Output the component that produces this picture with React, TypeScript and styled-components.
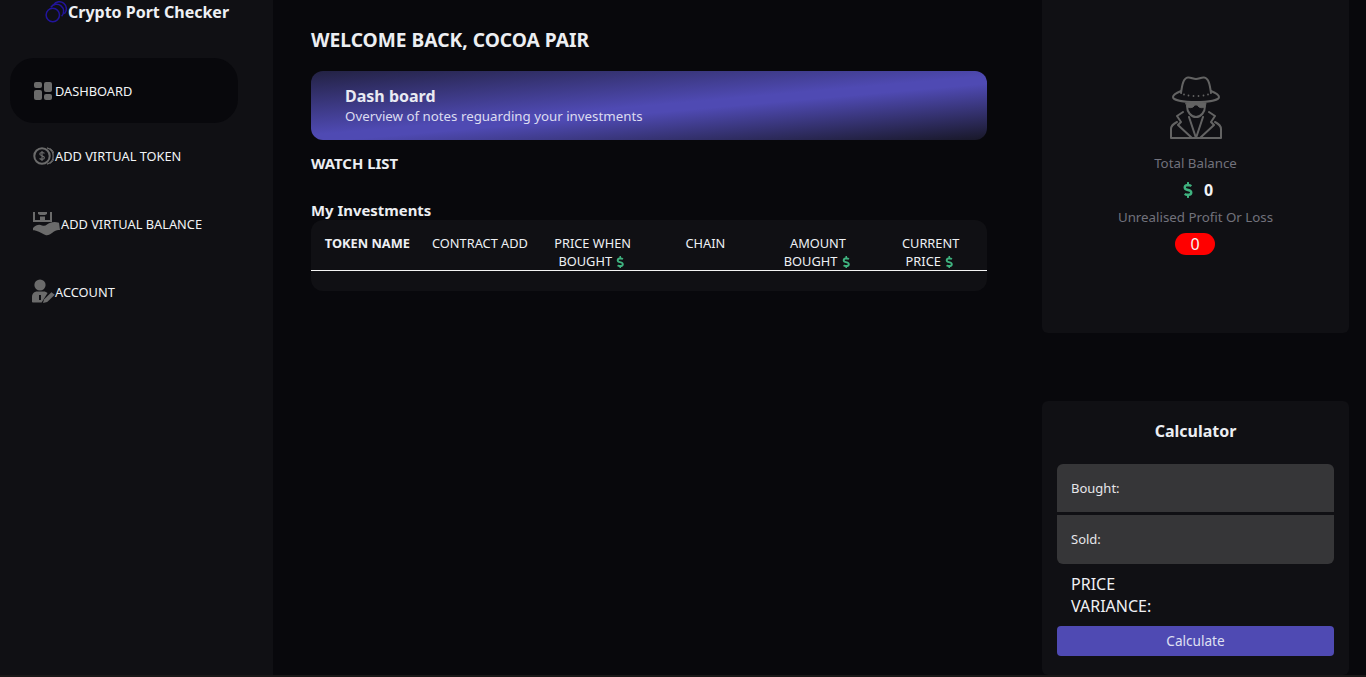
import React from "react";
import styled, { createGlobalStyle } from "styled-components";
import { FaDollarSign } from "react-icons/fa";

const Global = createGlobalStyle`
  html, body { margin: 0; padding: 0; background: #1a1818; }
  body { font-family: "Noto Sans", "DejaVu Sans", sans-serif; color: #f2f2f2; overflow: hidden; }
  * { box-sizing: border-box; }
`;

const Page = styled.div`
  display: grid;
  grid-template-columns: 273px 1fr;
  height: 675px;
  overflow: hidden;
  background: #08080c;
`;

const Sidebar = styled.aside`
  background: #101014;
  padding-left: 10px;
`;

const Brand = styled.div`
  display: flex;
  align-items: flex-start;
  height: 58px;
  padding-left: 35px;
`;

const BrandName = styled.span`
  font-size: 16px;
  font-weight: 700;
  line-height: 24px;
  white-space: nowrap;
  color: #eef0f4;
  margin-left: -1px;
`;

const NavList = styled.nav`
  display: flex;
  flex-direction: column;
  width: 228px;
`;

const NavItem = styled.div<{ $active?: boolean; $h: number }>`
  display: flex;
  align-items: center;
  height: ${(p) => p.$h}px;
  padding-left: 22px;
  font-size: 12.8px;
  color: #f2f4f6;
  border-radius: 24px;
  background: ${(p) => (p.$active ? "#08080c" : "transparent")};
  white-space: nowrap;
`;

const IconSlot = styled.span<{ $w: number; $ml?: number }>`
  display: inline-flex;
  width: ${(p) => p.$w}px;
  padding-left: ${(p) => p.$ml ?? 0}px;
  flex: none;
`;

const Main = styled.main`
  display: grid;
  grid-template-columns: 676px 307px;
  column-gap: 55px;
  padding-left: 38px;
  align-items: start;
`;

const Center = styled.section`
  display: flex;
  flex-direction: column;
  padding-top: 27px;
`;

const Welcome = styled.h1`
  margin: 0;
  font-size: 19.2px;
  line-height: 26px;
  font-weight: 700;
  color: #eceef2;
`;

const Banner = styled.div`
  margin-top: 18px;
  height: 69px;
  padding: 15px 0 0 34px;
  border-radius: 12px;
  background: linear-gradient(175deg, #181828 -12%, #4f4ab3 50%, #4f4ab3 56%, #13131b 104%);
`;

const BannerTitle = styled.div`
  font-size: 16px;
  font-weight: 700;
  line-height: 20px;
  color: #e9eaf2;
`;

const BannerText = styled.div`
  font-size: 13.3px;
  line-height: 20px;
  color: #dcdcf0;
`;

const SectionTitle = styled.h2<{ $top: number }>`
  margin: ${(p) => p.$top}px 0 0;
  font-size: 14.9px;
  line-height: 20px;
  font-weight: 700;
  color: #eceef2;
`;

const TableCard = styled.div`
  height: 71px;
  border-radius: 12px;
  background: #101014;
`;

const Table = styled.table`
  width: 100%;
  table-layout: fixed;
  border-collapse: collapse;
`;

const Th = styled.th<{ $strong?: boolean }>`
  padding: 14px 8px 0;
  height: 50px;
  vertical-align: top;
  font-size: 12.8px;
  line-height: 18px;
  font-weight: ${(p) => (p.$strong ? 700 : 400)};
  color: #eef0f4;
  text-align: center;
  border-bottom: 1px solid #f4f4f4;
`;

const Dollar = styled(FaDollarSign)`
  color: #3fb27f;
  vertical-align: -2px;
`;

const HeaderDollar = styled(Dollar)`
  margin-left: -1px;
`;

const Side = styled.section`
  display: flex;
  flex-direction: column;
  gap: 68px;
`;

const BalanceCard = styled.div`
  height: 333px;
  padding-top: 76px;
  background: #101014;
  border-radius: 0 0 6px 6px;
  display: flex;
  flex-direction: column;
  align-items: center;
`;

const BalanceLabel = styled.div`
  font-size: 13.3px;
  line-height: 18px;
  color: #72727c;
`;

const TotalLabel = styled(BalanceLabel)`
  margin-top: 15px;
`;

const BalanceValue = styled.div`
  display: flex;
  align-items: center;
  gap: 8px;
  height: 18px;
  margin: 9px 0;
  padding-left: 2px;
  font-size: 16px;
  font-weight: 700;
  color: #f2f4f6;
`;

const LossPill = styled.div`
  width: 40px;
  height: 22px;
  margin: 7px 1px 0 0;
  border-radius: 11px;
  background: #ff0000;
  color: #f4f4f4;
  font-size: 16px;
  line-height: 22px;
  text-align: center;
`;

const CalcCard = styled.div`
  height: 274px;
  padding: 0 15px;
  background: #101014;
  border-radius: 6px;
`;

const CalcTitle = styled.h3`
  margin: 0;
  padding-top: 19px;
  height: 63px;
  text-align: center;
  font-size: 16px;
  line-height: 22px;
  font-weight: 700;
  color: #eceef2;
`;

const Field = styled.div<{ $pos: "top" | "bottom" }>`
  height: ${(p) => (p.$pos === "top" ? 48 : 49)}px;
  margin-top: ${(p) => (p.$pos === "top" ? 0 : 3)}px;
  padding-bottom: ${(p) => (p.$pos === "top" ? 0 : 2)}px;
  display: flex;
  align-items: center;
  padding-left: 14px;
  font-size: 13px;
  color: #e6e6ea;
  background: #363638;
  border-radius: ${(p) => (p.$pos === "top" ? "6px 6px 0 0" : "0 0 6px 6px")};
`;

const Variance = styled.div`
  width: 110px;
  margin: 9px 0 9px 14px;
  font-size: 16px;
  line-height: 22px;
  color: #f0f0f4;
`;

const CalcButton = styled.button`
  display: block;
  width: 100%;
  height: 30px;
  padding: 0 0 2px;
  border: 0;
  border-radius: 4px;
  background: #4f4ab3;
  color: #dfe0f2;
  font-family: inherit;
  font-size: 13.6px;
`;

const LogoIcon = () => (
  <svg width="24" height="24" viewBox="0 0 24 24" fill="none" stroke="#22159c" strokeWidth="1.5">
    <circle cx="7.8" cy="15" r="6.7" />
    <path d="M5.8 7.4A7 7 0 1 1 16.6 16.2" />
    <path d="M8.6 4.9A7 7 0 1 1 19.4 13.7" />
  </svg>
);

const DashIcon = () => (
  <svg width="18" height="18" viewBox="0 0 18 18" fill="#6b6b6b">
    <rect x="0" y="0" width="8" height="6" rx="2" />
    <rect x="0" y="8" width="8" height="10" rx="2" />
    <rect x="10" y="0" width="8" height="10" rx="2" />
    <rect x="10" y="12" width="8" height="6" rx="2" />
  </svg>
);

const CoinIcon = () => (
  <svg width="21" height="18" viewBox="0 0 21 18" fill="none" stroke="#6b6b6b">
    <circle cx="9" cy="9" r="7.7" strokeWidth="2" />
    <path d="M14 .9a8.400 8.400 0 0 1 0 16.200" strokeWidth="1.2" />
    <path d="M17 1.600a8.400 8.400 0 0 1 0 14.800" strokeWidth="1" />
    <path d="M11.400 6.400C10.800 5.200 6.800 5 6.800 7c0 2.200 4.600 1.400 4.600 3.800 0 2-4 1.900-4.800.6M9 4v10" strokeWidth="1.2" />
  </svg>
);

const BalanceIcon = () => (
  <svg width="27" height="25" viewBox="0 0 27 25" fill="#6b6b6b">
    <path d="M0 1h2v8h15V1h2v10H0z" />
    <path d="M5 1h9v2l-2 1H7L5 3zM7 5.500h5V9H7z" />
    <path d="M0 17c3-3 6-3.800 9-2.600 2 .8 3.500.4 5-.8 3-2.200 7-3.400 12-1.800l1 7.200c-2 0-4 .2-6 1.400-3 2.200-5.600 4.200-8 3.800-3-.5-6-3.600-10-4.400-1.200-.3-2.600-.4-3-.8z" />
  </svg>
);

const AccountIcon = () => (
  <svg width="23" height="25" viewBox="0 0 23 25" fill="#6b6b6b">
    <circle cx="8" cy="6" r="5.600" />
    <path d="M0 23v-5c0-3.400 2.400-5.500 5-5.500h6.600c1.600 0 3 .6 4 1.600L9.600 23.400H1a1 1 0 0 1-1-.4z" />
    <path d="M11 24l1-3.400 7.400-7.400 3.400 2.600-7.600 7.200z" />
    <rect x="7" y="16" width="2" height="5" fill="#101014" />
  </svg>
);

const SpyIcon = () => (
  <svg width="54" height="63" viewBox="0 0 54 63" fill="none" stroke="#636363" strokeWidth="2" strokeLinejoin="round" strokeLinecap="round">
    <path d="M12 17C13 10 14 2 19 1.500c3-.3 5 1.500 8 1.500s5-1.800 8-1.500C40 2 41 10 42 17" />
    <path d="M12 15C7 17 4 19 4 21c0 3 10 5 23 5s23-2 23-5c0-2-3-4-8-6" />
    <path d="M15 18.500h.01M19.500 19.500h.01M24.500 20h.01M29.500 20h.01M34.500 19.500h.01M39 18.500h.01" strokeWidth="1.800" />
    <path d="M18 30c0 6 4 11 9 11s9-5 9-11" />
    <path d="M17 27h20l-.5 2.500c-1 3-7 3-8-.5h-3c-1 3.500-7 3.500-8 .5z" fill="#636363" strokeWidth="1" />
    <path d="M14 36l-6 4 4 6-3 3 14 13" />
    <path d="M40 36l6 4-4 6 3 3-14 13" />
    <path d="M20 41l7 21 7-21" />
    <path d="M2 62h50M2 62v-9c0-3 2-5 6-7M52 62v-9c0-3-2-5-6-7" />
  </svg>
);

const headers: { text: string; dollar?: boolean; strong?: boolean }[] = [
  { text: "TOKEN NAME", strong: true },
  { text: "CONTRACT ADD" },
  { text: "PRICE WHEN BOUGHT", dollar: true },
  { text: "CHAIN" },
  { text: "AMOUNT BOUGHT", dollar: true },
  { text: "CURRENT PRICE", dollar: true },
];

export default function App() {
  return (
    <>
      <Global />
      <Page>
        <Sidebar>
          <Brand>
            <LogoIcon />
            <BrandName>Crypto Port Checker</BrandName>
          </Brand>
          <NavList>
            <NavItem $active $h={65}>
              <IconSlot $w={23} $ml={2}><DashIcon /></IconSlot>DASHBOARD
            </NavItem>
            <NavItem $h={65}>
              <IconSlot $w={23} $ml={1}><CoinIcon /></IconSlot>ADD VIRTUAL TOKEN
            </NavItem>
            <NavItem $h={71}>
              <IconSlot $w={29} $ml={1}><BalanceIcon /></IconSlot>ADD VIRTUAL BALANCE
            </NavItem>
            <NavItem $h={65}>
              <IconSlot $w={23}><AccountIcon /></IconSlot>ACCOUNT
            </NavItem>
          </NavList>
        </Sidebar>
        <Main>
          <Center>
            <Welcome>WELCOME BACK, COCOA PAIR</Welcome>
            <Banner>
              <BannerTitle>Dash board</BannerTitle>
              <BannerText>Overview of notes reguarding your investments</BannerText>
            </Banner>
            <SectionTitle $top={13}>WATCH LIST</SectionTitle>
            <SectionTitle $top={27}>My Investments</SectionTitle>
            <TableCard>
              <Table>
                <thead>
                  <tr>
                    {headers.map((h) => (
                      <Th key={h.text} $strong={h.strong}>
                        {h.text}
                        {h.dollar && <>{"\u00A0"}<HeaderDollar size={12.5} /></>}
                      </Th>
                    ))}
                  </tr>
                </thead>
              </Table>
            </TableCard>
          </Center>
          <Side>
            <BalanceCard>
              <SpyIcon />
              <TotalLabel>Total Balance</TotalLabel>
              <BalanceValue>
                <Dollar size={16} />
                <span>0</span>
              </BalanceValue>
              <BalanceLabel>Unrealised Profit Or Loss</BalanceLabel>
              <LossPill>0</LossPill>
            </BalanceCard>
            <CalcCard>
              <CalcTitle>Calculator</CalcTitle>
              <Field $pos="top">Bought:</Field>
              <Field $pos="bottom">Sold:</Field>
              <Variance>PRICE VARIANCE:</Variance>
              <CalcButton>Calculate</CalcButton>
            </CalcCard>
          </Side>
        </Main>
      </Page>
    </>
  );
}
